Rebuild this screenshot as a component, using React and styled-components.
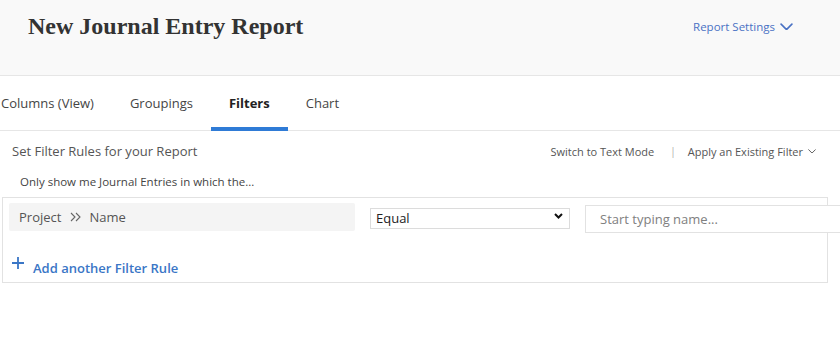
import React from 'react'
import styled, { createGlobalStyle } from 'styled-components'

const GlobalStyle = createGlobalStyle`
  html, body {
    margin: 0;
    padding: 0;
    background: #fff;
    overflow: hidden;
  }
  body {
    font-family: "Open Sans", "Liberation Sans", Arial, sans-serif;
  }
`

const tabs = ['Columns (View)', 'Groupings', 'Filters', 'Chart']

const Chevron = ({ size = 12, stroke = 1.6 }) => (
  <svg width={size} height={size * 0.6} viewBox="0 0 12 7" fill="none">
    <path d="M1 1l5 5 5-5" stroke="currentColor" strokeWidth={stroke} strokeLinecap="round" strokeLinejoin="round" />
  </svg>
)

const App = () => {
  return (
    <Page>
      <GlobalStyle />
      <Header>
        <Title>New Journal Entry Report</Title>
        <SettingsLink>
          Report Settings
          <Chevron size={13} stroke={1.5} />
        </SettingsLink>
      </Header>

      <TabBar>
        {tabs.map(t => (
          <Tab key={t} active={t === 'Filters'}>{t}</Tab>
        ))}
      </TabBar>

      <Toolbar>
        <ToolbarTitle>Set Filter Rules for your Report</ToolbarTitle>
        <ToolbarActions>
          <ActionLink>Switch to Text Mode</ActionLink>
          <Separator>|</Separator>
          <ActionLink>
            Apply an Existing Filter
            <Chevron size={8} stroke={1.4} />
          </ActionLink>
        </ToolbarActions>
      </Toolbar>

      <Hint>Only show me Journal Entries in which the...</Hint>

      <FilterBox>
        <RuleRow>
          <FieldPath>
            Project
            <PathArrow width="11" height="10" viewBox="0 0 11 10" fill="none">
              <path d="M1 1l4 4-4 4M6 1l4 4-4 4" stroke="#666" strokeWidth="1.1" />
            </PathArrow>
            Name
          </FieldPath>
          <SelectWrap>
            <Select defaultValue="Equal">
              <option>Equal</option>
              <option>Not Equal</option>
            </Select>
            <SelectArrow>
              <svg width="9" height="6" viewBox="0 0 9 6" fill="none">
                <path d="M1 1l3.5 3.5L8 1" stroke="#111" strokeWidth="2" />
              </svg>
            </SelectArrow>
          </SelectWrap>
          <NameInput placeholder="Start typing name..." />
        </RuleRow>
        <AddRule>
          <Plus width="12" height="12" viewBox="0 0 12 12">
            <path d="M6 0v12M0 6h12" stroke="currentColor" strokeWidth="1.8" />
          </Plus>
          Add another Filter Rule
        </AddRule>
      </FilterBox>
    </Page>
  )
}

export default App

const Page = styled.div`
  width: 840px;
  height: 340px;
  overflow: hidden;
`

const Header = styled.div`
  height: 76px;
  box-sizing: border-box;
  background: #f9f9f9;
  border-bottom: 1px solid #e6e6e6;
  display: flex;
  align-items: flex-start;
  justify-content: space-between;
  padding: 0 47px 0 28px;
`

const Title = styled.h1`
  margin: 13px 0 0;
  font-family: "Liberation Serif", "Times New Roman", serif;
  font-size: 24px;
  font-weight: 700;
  color: #333;
`

const SettingsLink = styled.a`
  margin-top: 19px;
  display: flex;
  align-items: center;
  gap: 5px;
  font-size: 11.5px;
  color: #4a72c4;
  cursor: pointer;
`

const TabBar = styled.div`
  display: flex;
  height: 54px;
  margin-left: -17px;
  border-bottom: 1px solid #e6e6e6;
`

const Tab = styled.div`
  display: flex;
  align-items: center;
  padding: 3px 18px 0;
  font-size: 13px;
  color: ${p => (p.active ? '#222' : '#454545')};
  font-weight: ${p => (p.active ? 700 : 400)};
  border-bottom: 4px solid ${p => (p.active ? '#2f7bd6' : 'transparent')};
  margin-bottom: -1px;
`

const Toolbar = styled.div`
  display: flex;
  align-items: center;
  justify-content: space-between;
  height: 40px;
  padding: 0 24px 0 12px;
`

const ToolbarTitle = styled.div`
  font-size: 13px;
  color: #555;
`

const ToolbarActions = styled.div`
  display: flex;
  align-items: center;
  font-size: 11px;
  color: #555;
`

const ActionLink = styled.span`
  display: flex;
  align-items: center;
  gap: 5px;
  cursor: pointer;
`

const Separator = styled.span`
  color: #aaa;
  margin: 0 12px 0 16px;
  font-size: 10px;
`

const Hint = styled.div`
  font-size: 11.5px;
  font-weight: 500;
  color: #444;
  padding: 3px 0 0 20px;
  height: 26px;
  box-sizing: border-box;
`

const FilterBox = styled.div`
  margin-left: 2px;
  width: 826px;
  height: 86px;
  box-sizing: border-box;
  border: 1px solid #e2e2e2;
  padding: 5px 0 0 6px;
  display: flex;
  flex-direction: column;
`

const RuleRow = styled.div`
  display: flex;
  align-items: flex-start;
  gap: 15px;
  & > * {
    flex-shrink: 0;
  }
`

const FieldPath = styled.div`
  width: 346px;
  height: 28px;
  box-sizing: border-box;
  background: #f4f4f4;
  border-radius: 2px;
  display: flex;
  align-items: center;
  padding-left: 10px;
  font-size: 13px;
  color: #555;
`

const PathArrow = styled.svg`
  margin: 0 8px 0 9px;
`

const SelectWrap = styled.div`
  position: relative;
  margin-top: 3px;
`

const Select = styled.select`
  appearance: none;
  width: 200px;
  height: 21px;
  border: 1px solid #dcdcdc;
  border-radius: 0;
  background: #fff;
  font-family: "Open Sans", "Liberation Sans", Arial, sans-serif;
  font-size: 13px;
  color: #222;
  padding: 0 0 0 5px;
  outline: none;
`

const SelectArrow = styled.span`
  position: absolute;
  right: 7px;
  top: 7px;
  display: flex;
  pointer-events: none;
`

const NameInput = styled.input`
  margin-top: 2px;
  width: 270px;
  height: 28px;
  box-sizing: border-box;
  border: 1px solid #e2e2e2;
  padding: 0 14px;
  font-family: "Open Sans", "Liberation Sans", Arial, sans-serif;
  font-size: 13px;
  color: #333;
  outline: none;
  &::placeholder {
    color: #808080;
  }
`

const AddRule = styled.div`
  margin-top: 26px;
  margin-left: 3px;
  display: flex;
  align-items: center;
  font-size: 13px;
  font-weight: 600;
  color: #3a76c6;
  cursor: pointer;
`

const Plus = styled.svg`
  margin-right: 9px;
  position: relative;
  top: -5px;
`
